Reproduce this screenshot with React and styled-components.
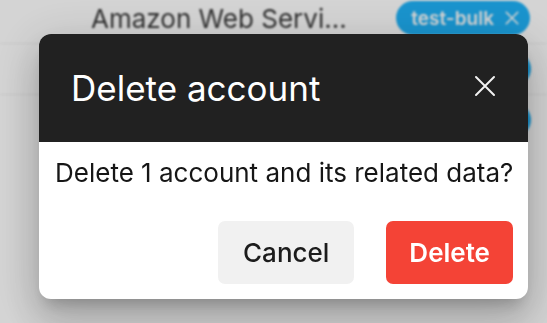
import React from "react"
import styled, { createGlobalStyle } from "styled-components"

const GlobalStyle = createGlobalStyle`
  html, body {
    margin: 0;
    background: #ffffff;
    overflow: hidden;
  }
  body {
    font-family: Inter, "Noto Sans", sans-serif;
  }
`

const Page = styled.div`
  height: 323px;
  filter: blur(0.9px);
`

const List = styled.div`
  margin-top: -7px;
`

const Row = styled.div`
  display: flex;
  align-items: center;
  justify-content: space-between;
  height: 50px;
  padding: 0 ${p => p.$edge}px 0 91px;
  border-bottom: 1px solid #f0f0f0;

  &:last-child {
    border-bottom: none;
  }
`

const Name = styled.span`
  font-size: 26px;
  color: #3c3c3c;
`

const Tag = styled.span`
  display: inline-flex;
  align-items: center;
  gap: 11px;
  height: 34px;
  padding: 0 11px 0 15px;
  border-radius: 17px;
  background: #1fb2f8;
  color: #ffffff;
  font-size: 19px;
  font-weight: 600;
`

const Backdrop = styled.div`
  position: fixed;
  inset: 0;
  display: flex;
  align-items: flex-start;
  padding: 34px 0 0 39px;
  background: rgba(0, 0, 0, 0.17);
`

const Dialog = styled.div`
  width: 489px;
  border-radius: 12px;
  overflow: hidden;
  background: #ffffff;
  box-shadow: 0 11px 15px -7px rgba(0, 0, 0, 0.2),
    0 24px 38px 3px rgba(0, 0, 0, 0.14), 0 9px 46px 8px rgba(0, 0, 0, 0.12);
`

const Header = styled.div`
  display: flex;
  align-items: center;
  justify-content: space-between;
  height: 108px;
  padding: 0 32px 0 32px;
  background: #212121;
`

const Title = styled.h2`
  margin: 0;
  font-size: 35px;
  font-weight: 400;
  color: #ffffff;
`

const CloseButton = styled.button`
  display: flex;
  padding: 0;
  margin-top: -4px;
  border: none;
  background: none;
  color: #f2f2f2;
  cursor: pointer;
`

const Message = styled.p`
  margin: 0;
  padding: 11px 14px 0 16px;
  font-size: 26px;
  line-height: 1.5;
  color: #161616;
  white-space: nowrap;
`

const Actions = styled.div`
  display: flex;
  justify-content: flex-end;
  gap: 32px;
  padding: 29px 15px 15px;
`

const Button = styled.button`
  height: 63px;
  padding: 0 ${p => (p.$danger ? 23 : 25)}px;
  border: none;
  border-radius: 7px;
  font-family: inherit;
  font-size: 26px;
  font-weight: ${p => (p.$danger ? 600 : 500)};
  background: ${p => (p.$danger ? "#f44336" : "#f1f1f1")};
  color: ${p => (p.$danger ? "#ffffff" : "#1c1c1c")};
  cursor: pointer;
`

const CloseIcon = ({ size = 22, width = 2 }) => (
  <svg width={size} height={size} viewBox="0 0 22 22" fill="none">
    <path
      d="M2 2L20 20M20 2L2 20"
      stroke="currentColor"
      strokeWidth={width}
      strokeLinecap="round"
    />
  </svg>
)

const rows = [
  { name: "Amazon Web Servi...", tag: "test-bulk", edge: 17 },
  { name: "Amazon Web Servi...", tag: "test-bulk", edge: 16 },
  { name: "Amazon Web Servi...", tag: "test-bulk", edge: 16 },
]

const App = () => {
  return (
    <>
      <GlobalStyle />
      <Page>
        <List>
          {rows.map((row, i) => (
            <Row key={i} $edge={row.edge}>
              <Name>{row.name}</Name>
              <Tag>
                {row.tag}
                <CloseIcon size={14} width={2.6} />
              </Tag>
            </Row>
          ))}
        </List>
      </Page>
      <Backdrop>
        <Dialog role="dialog">
          <Header>
            <Title>Delete account</Title>
            <CloseButton aria-label="Close">
              <CloseIcon />
            </CloseButton>
          </Header>
          <Message>Delete 1 account and its related data?</Message>
          <Actions>
            <Button>Cancel</Button>
            <Button $danger>Delete</Button>
          </Actions>
        </Dialog>
      </Backdrop>
    </>
  )
}

export default App
